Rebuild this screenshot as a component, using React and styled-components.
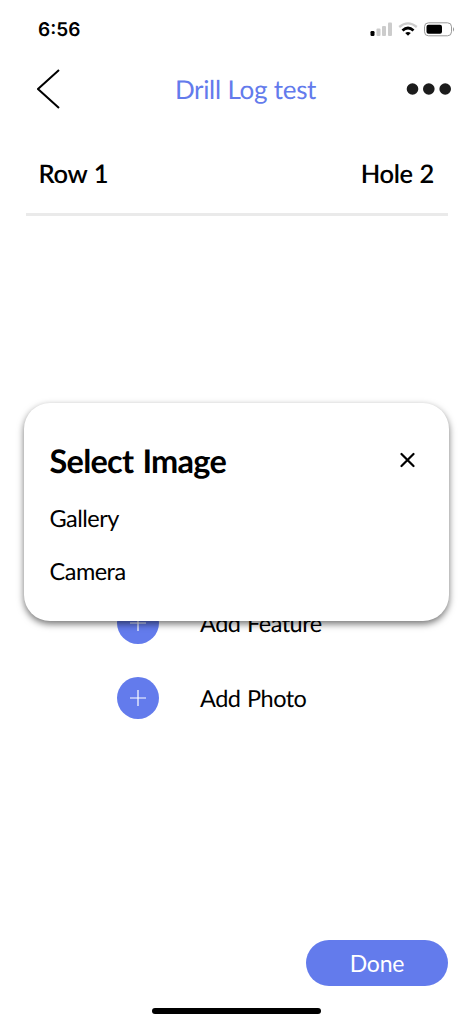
import React from 'react'
import styled, { createGlobalStyle } from 'styled-components'

const GlobalStyle = createGlobalStyle`
  * {
    box-sizing: border-box;
  }
  body {
    margin: 0;
    background: #fff;
    color: #000;
    font-family: Lato, sans-serif;
    text-rendering: geometricPrecision;
  }
  button {
    font-family: inherit;
    border: none;
    background: none;
    padding: 0;
  }
  svg {
    display: block;
  }
`;

const Screen = styled.div`
  position: relative;
  display: flex;
  flex-direction: column;
  height: 1024px;
  overflow: hidden;
`;

const StatusBar = styled.div`
  display: flex;
  justify-content: space-between;
  height: 58px;
  padding: 18px 17px 0 38px;
  font: 600 19px/24px Inter, sans-serif;
`;

const NavBar = styled.header`
  display: grid;
  grid-template-columns: 60px 1fr 60px;
  align-items: center;
  height: 62px;
  padding: 0 22px 0 37px;
  h1 {
    margin: 0;
    padding: 0 0 1px 3px;
    text-align: center;
    font-size: 26px;
    font-weight: 400;
    letter-spacing: -0.35px;
    word-spacing: 0.5px;
    color: #637bec;
  }
`;

const More = styled.button`
  justify-self: end;
`;

const HoleInfo = styled.div`
  display: flex;
  justify-content: space-between;
  margin: 20px 25px 0 26px;
  height: 76px;
  padding: 18px 14px 0 12.5px;
  border-bottom: 3px solid #eaeaea;
  font-size: 25.5px;
  line-height: 32px;
  font-weight: 600;
  letter-spacing: -0.4px;
  word-spacing: 1px;
`;

const Actions = styled.div`
  display: flex;
  flex-direction: column;
  gap: 33px;
  margin-top: 386px;
  padding-left: 117px;
`;

const ActionRow = styled.div`
  display: flex;
  align-items: center;
  gap: 41px;
  height: 42px;
  font-size: 23.5px;
  letter-spacing: -0.5px;
  word-spacing: 1px;
  span {
    margin-top: 1px;
  }
`;

const AddButton = styled.button`
  display: grid;
  place-items: center;
  width: 42px;
  height: 42px;
  border-radius: 50%;
  background: #637bec;
`;

const Footer = styled.footer`
  display: flex;
  flex-direction: column;
  align-items: center;
  margin-top: auto;
  padding-bottom: 10px;
`;

const DoneButton = styled.button`
  align-self: flex-end;
  margin: 0 25px 22px 0;
  width: 142px;
  height: 46px;
  padding-bottom: 1px;
  border-radius: 23px;
  background: #637bec;
  color: #fff;
  font-size: 23px;
  letter-spacing: -0.2px;
`;

const HomeIndicator = styled.div`
  width: 169px;
  height: 6px;
  border-radius: 3px;
  background: #000;
`;

const Modal = styled.div`
  position: absolute;
  top: 403px;
  left: 24px;
  width: 425px;
  height: 218px;
  padding: 38px 34px 0 25.5px;
  border-radius: 26px;
  background: #fff;
  box-shadow: 0 3px 7px rgba(0, 0, 0, 0.55);
`;

const ModalHeader = styled.div`
  display: flex;
  align-items: center;
  justify-content: space-between;
  h2 {
    margin: 0;
    font-size: 32.5px;
    line-height: 40px;
    font-weight: 700;
    letter-spacing: -0.75px;
    word-spacing: 2px;
  }
  button {
    margin-top: -3px;
  }
`;

const Option = styled.div`
  height: 53px;
  font-size: 23.5px;
  line-height: 30px;
  letter-spacing: -0.5px;
`;

const Options = styled.div`
  margin-top: 22.5px;
`;

const actions = ['Add Feature', 'Add Photo']
const options = ['Gallery', 'Camera']

const StatusIcons = () => (
  <svg width="86" height="22" viewBox="0 0 86 22">
    <rect x="0.500" y="13" width="4" height="5" rx="1.200" />
    <g fill="#ccc">
      <rect x="6.500" y="10.500" width="4" height="7.500" rx="1" />
      <rect x="12" y="8" width="4" height="10" rx="1" />
      <rect x="18" y="4.500" width="4" height="13.500" rx="1" />
    </g>
    <g fill="none" strokeWidth="2.300">
      <path d="M29.200 9Q38 1.800 46.800 9" stroke="#ccc" />
      <path d="M32.500 12.500Q38 7.500 43.500 12.500" stroke="#000" strokeWidth="2.800" />
    </g>
    <path d="M35.200 15Q38 13 40.800 15L38 17.800Z" />
    <rect x="54.500" y="4.800" width="27" height="13" rx="4" fill="none" stroke="#999" />
    <rect x="56.500" y="6.800" width="15.500" height="9" rx="2" />
    <path d="M83 9q2.200 2.400 0 4.800Z" fill="#999" />
  </svg>
)

const App = () => {
  return (
    <Screen>
      <GlobalStyle />
      <StatusBar>
        <span>6:56</span>
        <StatusIcons />
      </StatusBar>
      <NavBar>
        <button aria-label="Back">
          <svg width="24" height="40" viewBox="0 0 24 40" fill="none" stroke="#000" strokeWidth="2">
            <path d="M22 1L1 20L22 39" />
          </svg>
        </button>
        <h1>Drill Log test</h1>
        <More aria-label="More">
          <svg width="45" height="12" viewBox="0 0 45 12" fill="#1c1c1c">
            <circle cx="6.500" cy="6" r="5.800" />
            <circle cx="22.800" cy="6" r="5.800" />
            <circle cx="39.200" cy="6" r="5.800" />
          </svg>
        </More>
      </NavBar>
      <HoleInfo>
        <span>Row 1</span>
        <span>Hole 2</span>
      </HoleInfo>
      <Actions>
        {actions.map(label => (
          <ActionRow key={label}>
            <AddButton aria-label={label}>
              <svg width="16" height="16" viewBox="0 0 16 16" stroke="#fff" strokeWidth="1.200">
                <path d="M8 0V16M0 8H16" />
              </svg>
            </AddButton>
            <span>{label}</span>
          </ActionRow>
        ))}
      </Actions>
      <Footer>
        <DoneButton>Done</DoneButton>
        <HomeIndicator />
      </Footer>
      <Modal>
        <ModalHeader>
          <h2>Select Image</h2>
          <button aria-label="Close">
            <svg width="16" height="16" viewBox="0 0 16 16" stroke="#000" strokeWidth="2.200" strokeLinecap="round">
              <path d="M2.500 2L14.500 14M14.500 2L2.500 14" />
            </svg>
          </button>
        </ModalHeader>
        <Options>
          {options.map(option => <Option key={option}>{option}</Option>)}
        </Options>
      </Modal>
    </Screen>
  )
}

export default App
